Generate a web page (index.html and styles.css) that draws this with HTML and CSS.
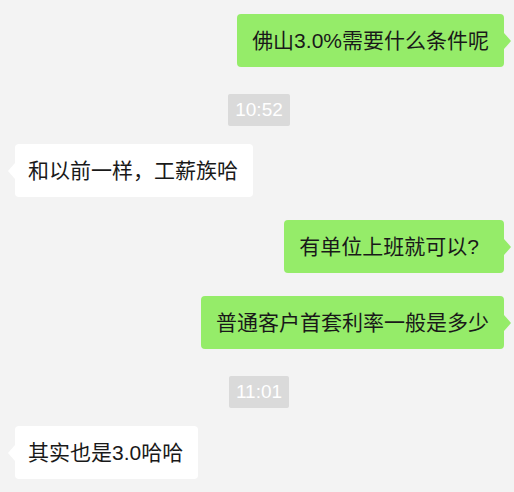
FILE: index.html
```html
<!DOCTYPE html>
<html lang="zh-CN">
<head>
    <meta charset="UTF-8">
    <title>聊天记录</title>
    <link rel="stylesheet" href="styles.css">
</head>
<body>
    <div class="chat">
        <div class="msg msg-me">
            <div class="bubble">佛山3.0%需要什么条件呢</div>
        </div>

        <div class="time"><span>10:52</span></div>

        <div class="msg msg-other">
            <div class="bubble">和以前一样，工薪族哈</div>
        </div>

        <div class="msg msg-me">
            <div class="bubble">有单位上班就可以<span class="interrogacao">?</span></div>
        </div>

        <div class="msg msg-me">
            <div class="bubble">普通客户首套利率一般是多少</div>
        </div>

        <div class="time"><span>11:01</span></div>

        <div class="msg msg-other">
            <div class="bubble">其实也是3.0哈哈</div>
        </div>
    </div>
</body>
</html>
```

FILE: styles.css
```css
:root {
    --fundo: #f3f3f3;
    --verde: #95ec69;
    --branco: #ffffff;
    --texto: #191919;
    --cinza: #dadada;
}

body {
    margin: 0;
    background-color: var(--fundo);
    font-family: "Liberation Sans", "Noto Sans CJK SC", sans-serif;
    color: var(--texto);
}

.chat {
    display: flex;
    flex-direction: column;
    padding: 14px 10px 0 15px;
}

.msg {
    display: flex;
}

.msg + .msg {
    margin-top: 23px;
}

.msg-me {
    justify-content: flex-end;
}

.msg-other {
    justify-content: flex-start;
}

.bubble {
    position: relative;
    font-size: 21px;
    line-height: 28px;
    padding: 13px 15px 12px 15px;
    border-radius: 4px;
}

.msg-me .bubble {
    background-color: var(--verde);
}

.msg-other .bubble {
    background-color: var(--branco);
    padding: 13px 15px 12px 13px;
}

.interrogacao {
    padding-right: 10px;
}

/* setinha do balão */
.bubble::after {
    content: "";
    position: absolute;
    top: 50%;
    margin-top: -8px;
    border-top: 8px solid transparent;
    border-bottom: 8px solid transparent;
}

.msg-me .bubble::after {
    right: -7px;
    border-left: 7px solid var(--verde);
}

.msg-other .bubble::after {
    left: -7px;
    border-right: 7px solid var(--branco);
}

.time {
    display: flex;
    justify-content: center;
    margin: 27px 0 18px 0;
    padding-right: 1px;
}

.time span {
    background-color: var(--cinza);
    color: var(--branco);
    font-size: 19px;
    line-height: 32px;
    padding: 0 7px;
    border-radius: 2px;
}
```
